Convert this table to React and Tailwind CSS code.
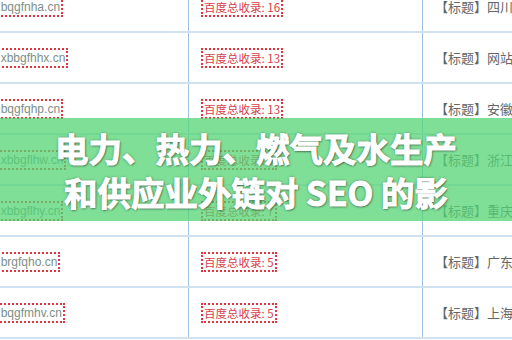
import React from 'react';

const rows = [
  { domain: 'www.bqgfnha.cn', count: 16, title: '【标题】四川新闻网站收录查询' },
  { domain: 'www.xbbgfhhx.cn', count: 13, title: '【标题】网站的收录情况' },
  { domain: 'www.bqgfqhp.cn', count: 13, title: '【标题】安徽新闻网站收录' },
  { domain: 'www.xbbgflhw.cn', count: 9, title: '【标题】浙江新闻网站收录' },
  { domain: 'www.xbbgflhy.cn', count: 7, title: '【标题】重庆新闻网站收录' },
  { domain: 'www.brgfqho.cn', count: 5, title: '【标题】广东新闻网站收录' },
  { domain: 'www.bqgfmhv.cn', count: 5, title: '【标题】上海新闻网站收录' },
];

function Row({ domain, count, title }) {
  return (
    <div className="flex h-[51px] border-b-2 border-[#d0e1f0]">
      <div className="w-[189px] shrink-0 overflow-hidden border-r border-[#9fc2e2] flex items-center">
        <span className="-ml-[31px] whitespace-nowrap border-2 border-dotted border-[#e0353d] px-[1px] text-[12px] leading-[16px] text-[#7d8f87] [font-family:'Liberation_Sans',Arial,sans-serif]">
          {domain}
        </span>
      </div>
      <div className="w-[234px] shrink-0 border-r border-[#9fc2e2] flex items-center pl-[12px]">
        <span className="whitespace-nowrap border-2 border-dotted border-[#e0353d] px-[1px] text-[11.5px] leading-[16px] text-[#d8414a] [font-family:'Noto_Sans_CJK_SC',sans-serif]">
          百度总收录: {count}
        </span>
      </div>
      <div className="flex-1 min-w-0 overflow-hidden flex items-center pl-[12px]">
        <span className="whitespace-nowrap text-[13px] text-[#666666] [font-family:'Noto_Sans_CJK_SC',sans-serif]">
          {title}
        </span>
      </div>
    </div>
  );
}

export default function App() {
  return (
    <div className="relative w-[512px] h-[340px] overflow-hidden bg-white">
      <div className="-mt-[18px]">
        {rows.map((r) => (
          <Row key={r.domain} {...r} />
        ))}
      </div>
      <div className="absolute left-0 right-0 top-[118px] h-[103px] bg-[rgba(84,212,116,0.75)] flex items-center justify-center">
        <h1 className="text-center text-white font-bold text-[33.5px] leading-[44px] [font-family:'Noto_Sans_CJK_SC',sans-serif] [-webkit-text-stroke:1px_white] [text-shadow:0_0_3px_rgba(0,0,0,0.5),1px_1px_2px_rgba(0,0,0,0.45)]">
          电力、热力、燃气及水生产
          <br />
          和供应业外链对 SEO 的影
        </h1>
      </div>
    </div>
  );
}
